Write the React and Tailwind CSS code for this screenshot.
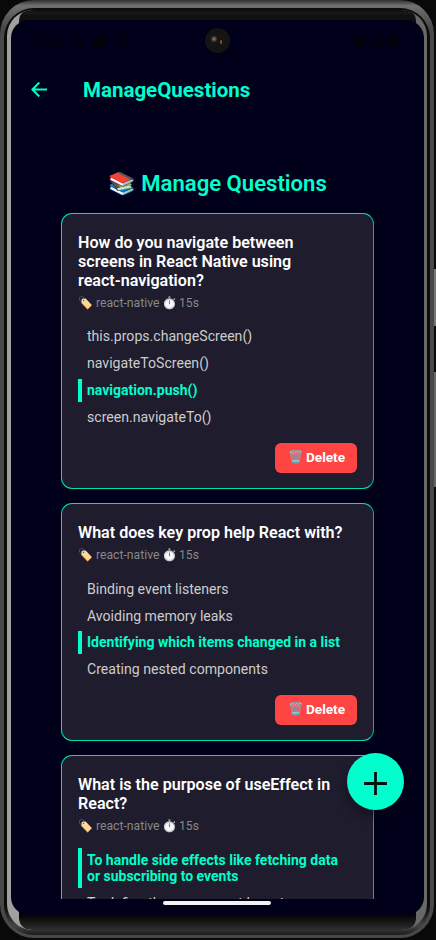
const questions = [
  {
    title: ['How do you navigate between', 'screens in React Native using', 'react-navigation?'],
    options: [
      { text: ['this.props.changeScreen()'] },
      { text: ['navigateToScreen()'] },
      { text: ['navigation.push()'], correct: true },
      { text: ['screen.navigateTo()'] },
    ],
    deletable: true,
  },
  {
    title: ['What does key prop help React with?'],
    options: [
      { text: ['Binding event listeners'] },
      { text: ['Avoiding memory leaks'] },
      { text: ['Identifying which items changed in a list'], correct: true },
      { text: ['Creating nested components'] },
    ],
    deletable: true,
  },
  {
    title: ['What is the purpose of useEffect in', 'React?'],
    options: [
      { text: ['To handle side effects like fetching data', 'or subscribing to events'], correct: true },
      { text: ['To define the component layout'] },
    ],
  },
];

const EMOJI = "font-['Noto_Color_Emoji',sans-serif]";

function Lines({ text }) {
  return text.map((line) => (
    <span key={line} className="block whitespace-nowrap">
      {line}
    </span>
  ));
}

function Option({ text, correct }) {
  return (
    <li
      className={
        correct
          ? 'border-l-4 border-[#00ffcc] py-[3.4px] pl-[5px] text-[14px] leading-[16.4px] font-bold text-[#00ffcc]'
          : 'border-l-4 border-transparent py-[3.4px] pl-[5px] text-[14.1px] leading-[16.4px] text-[#cccccc]'
      }
    >
      <Lines text={text} />
    </li>
  );
}

function QuestionCard({ title, options, deletable }) {
  return (
    <article className="shrink-0 rounded-[11px] border border-[#00e0b4] border-r-[#00b391] bg-[#1e1c2d] px-4 pt-[19px] pb-[15.5px]">
      <h2 className="text-[16.1px] leading-[19px] font-semibold text-white">
        <Lines text={title} />
      </h2>
      <p className="mt-[5px] flex h-4 items-center text-[12.2px] leading-4 text-[#888888]">
        <span className={`${EMOJI} w-[18px] text-[12px]`}>🏷️</span>
        <span className="w-[66px]">react-native</span>
        <span className={`${EMOJI} w-[17px] text-[12px]`}>⏱️</span>
        <span>15s</span>
      </p>
      <ul className="mt-[14.1px] flex flex-col gap-[3.7px]">
        {options.map((option) => (
          <Option key={option.text[0]} {...option} />
        ))}
      </ul>
      {deletable && (
        <div className="mt-[13.6px] flex justify-end">
          <button className="flex h-[30px] w-[82px] items-center rounded-[6px] bg-[#ff4444] pl-3 text-[13.6px] font-bold text-white">
            <span className={`${EMOJI} w-[19px] text-[12.4px]`}>🗑️</span>
            <span>Delete</span>
          </button>
        </div>
      )}
    </article>
  );
}

function StatusBar() {
  return (
    <div className="relative flex h-[43px] items-center justify-between pr-[27px] pl-[23px] text-[#020208]">
      <div className="flex items-center gap-[11px]">
        <span className="w-[27px] text-[14px] leading-none">7:09</span>
        <svg width="12" height="14" viewBox="0 0 12 14" fill="none" stroke="currentColor" strokeWidth="1.4">
          <path d="M6 1 11 3v4c0 3-2 5-5 6-3-1-5-3-5-6V3zM2 3l8 8" />
        </svg>
        <svg width="11" height="13" viewBox="0 0 11 13" className="ml-[-1px]" fill="currentColor">
          <path d="M4 0h6a1 1 0 0 1 1 1v11a1 1 0 0 1-1 1H1a1 1 0 0 1-1-1V4z" />
        </svg>
        <svg width="13" height="13" viewBox="0 0 13 13" fill="none" stroke="currentColor" strokeWidth="1.5">
          <circle cx="6.5" cy="6.5" r="5.5" />
          <path d="M1 4.500h11M3 3h7" />
        </svg>
      </div>
      <div className="flex items-center gap-[3px]">
        <svg width="15" height="12" viewBox="0 0 15 12" fill="currentColor">
          <path d="M0 3Q7.500-3 15 3L7.500 12z" />
        </svg>
        <svg width="13" height="13" viewBox="0 0 13 13" fill="currentColor">
          <path d="M0 13 13 0v13zm8-1.500h3.500V4L8 7.500z" fillRule="evenodd" />
        </svg>
        <svg width="8" height="13" viewBox="0 0 8 13" className="ml-[3px]" fill="currentColor">
          <path d="M2 0h4v1h2v12H0V1h2z" />
        </svg>
      </div>
      <div className="absolute top-2 left-[194px] size-[25px] rounded-full bg-[#141413]">
        <div className="absolute top-[9px] left-[7px] size-[4px] rounded-full bg-[#9c9590] blur-[1px]" />
        <div className="absolute top-[12px] left-[15px] h-[4px] w-[2px] rounded-full bg-[#8a4d13] blur-[0.5px]" />
      </div>
    </div>
  );
}

function Screen() {
  return (
    <div className="relative flex h-[895px] w-[413px] shrink-0 flex-col overflow-hidden rounded-[18px] bg-[#00001a]">
      <StatusBar />
      <header className="flex h-[54px] items-center pl-5">
        <svg width="16" height="16" viewBox="0 0 16 16" fill="none" stroke="#00ffcc" strokeWidth="2">
          <path d="M16 7.500H1.500M8.300 0.500 1.300 7.500l7 7" />
        </svg>
        <h1 className="ml-9 text-[20.5px] font-bold text-[#00ffcc]">ManageQuestions</h1>
      </header>
      <main className="flex h-[782px] flex-col overflow-hidden px-[50px] pt-[50px]">
        <div className="mb-[13px] flex h-[33px] shrink-0 items-center justify-center text-[22.1px] font-semibold whitespace-pre text-[#00ffcc]">
          <span className={EMOJI}>📚</span> Manage Questions
        </div>
        <div className="flex flex-col gap-[14.2px]">
          {questions.map((q) => (
            <QuestionCard key={q.title[0]} {...q} />
          ))}
        </div>
      </main>
      <button className="absolute top-[733px] left-[336px] flex size-[57px] items-center justify-center rounded-full bg-[#00ffcc] shadow-[-1px_6px_8px_rgba(0,0,20,0.35)]">
        <svg width="23" height="23" viewBox="0 0 23 23" className="mt-1" stroke="#06110f" strokeWidth="2.8">
          <path d="M11.500 0v23M0 11.500h23" />
        </svg>
      </button>
      <div className="absolute top-[881px] left-[152px] h-[4px] w-[108px] rounded-full bg-[#f2f0f2]" />
    </div>
  );
}

export default function App() {
  return (
    <div className="h-[940px] w-[436px] overflow-hidden bg-[#090909] font-[Roboto,sans-serif]">
      <div className="relative h-[940px] pr-[2px] pb-[2px]">
        <div className="h-full rounded-[34px] bg-linear-to-b from-[#303030] from-0% via-[#707070] via-[0.6%] to-[#484848] to-[3%] pt-[8px] pr-[4px] pb-[3px] pl-[4px]">
          <div className="h-full rounded-[30px] bg-linear-to-b from-[#0c0c0c] from-97% via-[#454545] via-[99%] to-[#1c1c1c] px-[3px] pt-[2px]">
            <div className="flex h-[920px] flex-col items-start overflow-hidden rounded-[26px] bg-linear-to-r from-[#a0a0a0] from-50% to-[#686868] to-50% pl-[4px]">
              <div className="-mb-[18px] ml-2 h-[28px] w-[397px] shrink-0 rounded-t-[10px] bg-linear-to-b from-[#0c0c0c] via-[#1a1a1a] via-10% to-[#101010] to-20%" />
              <Screen />
              <div className="-mt-[18px] ml-2 h-[33px] w-[397px] shrink-0 rounded-b-[12px] bg-linear-to-b from-[#050505] from-55% to-[#303030]" />
            </div>
          </div>
        </div>
        <div className="absolute top-[269px] right-0 h-[57px] w-[2px] bg-[#777777]" />
        <div className="absolute top-[372px] right-0 h-[115px] w-[2px] bg-[#666666]" />
      </div>
    </div>
  );
}
